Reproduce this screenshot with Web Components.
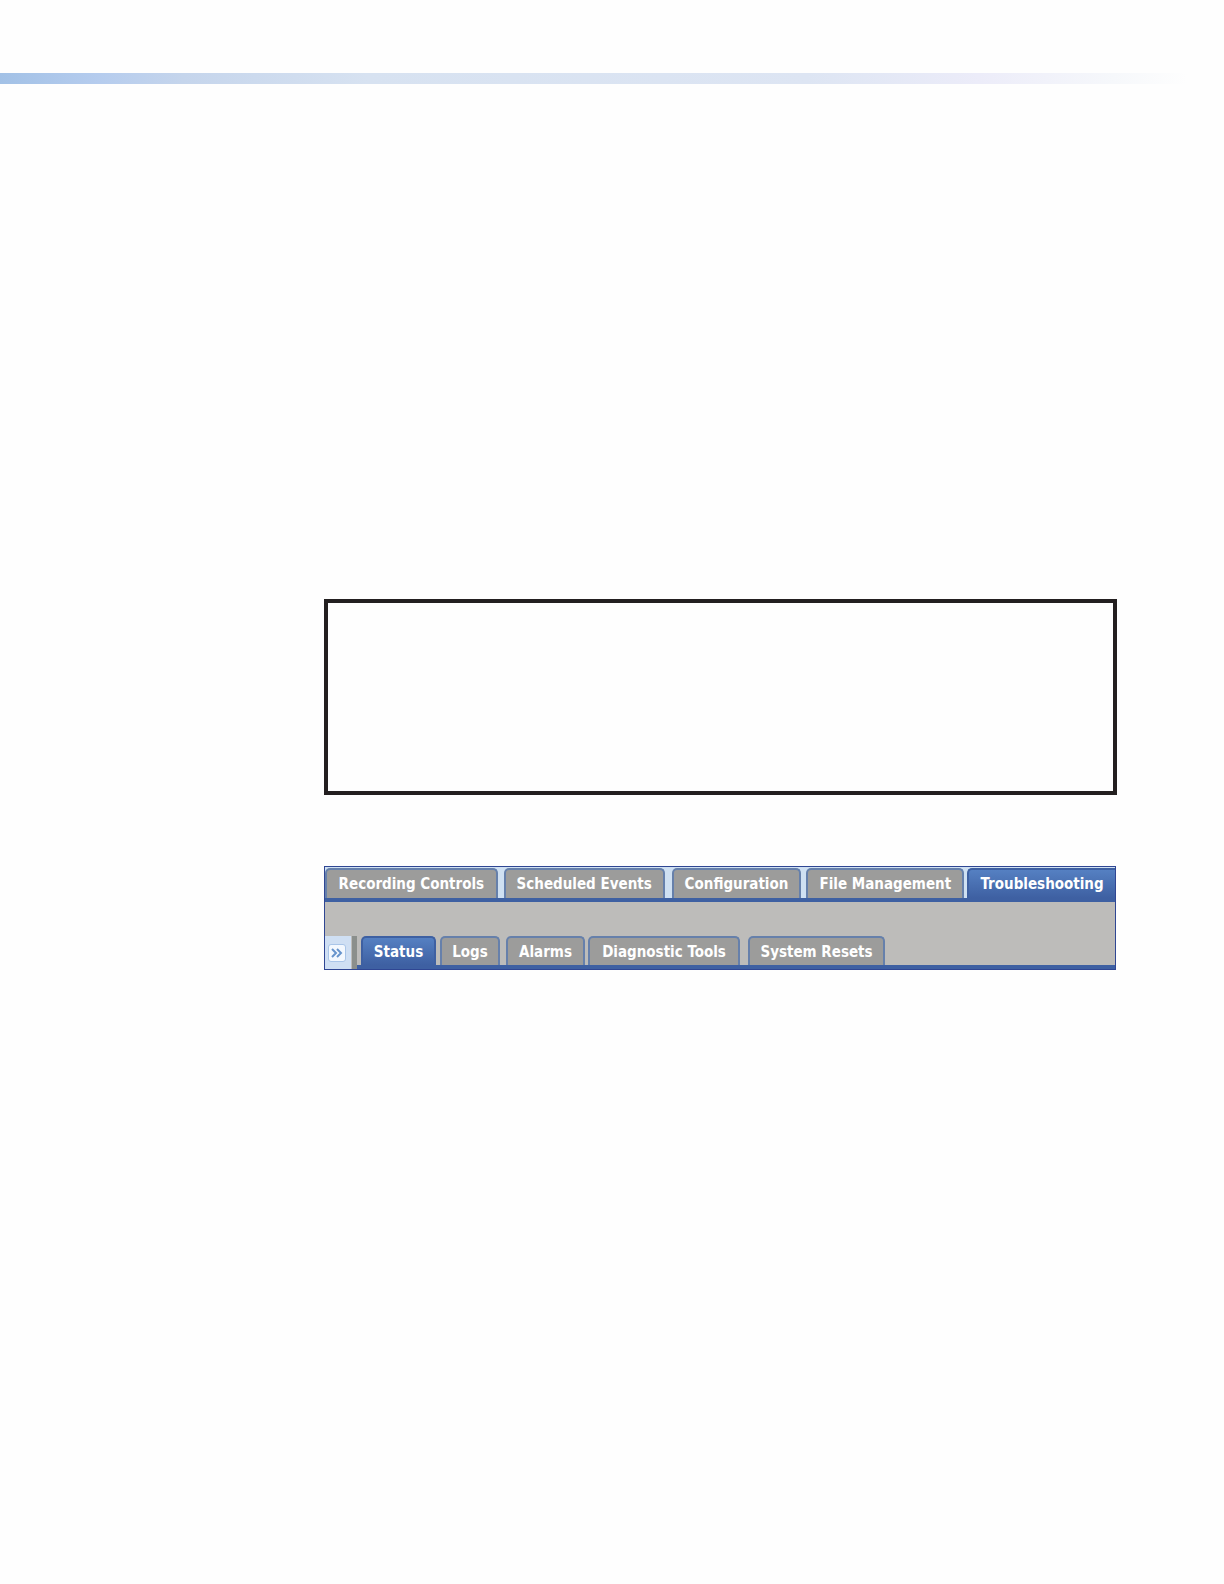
<!DOCTYPE html>
<html lang="en">
<head>
<meta charset="utf-8">
<meta name="viewport" content="width=device-width, initial-scale=1">
<title>Troubleshooting</title>
<style>
  body { margin: 0; background: #fefefe; font-family: "DejaVu Sans Condensed", "Noto Sans", sans-serif; }
</style>
</head>
<body>
<manual-page>
  <header-rule slot="header"></header-rule>
  <note-box></note-box>
  <tab-window>
    <tab-strip slot="main" label="Main">
      <tab-item style="--grow:173;--gap:6px">Recording Controls</tab-item>
      <tab-item style="--grow:161;--gap:7px">Scheduled Events</tab-item>
      <tab-item style="--grow:130;--gap:5px">Configuration</tab-item>
      <tab-item style="--grow:158;--gap:3px">File Management</tab-item>
      <tab-item style="--grow:148;--gap:0px" selected edge>Troubleshooting</tab-item>
    </tab-strip>
    <side-toggle slot="toggle"></side-toggle>
    <tab-strip slot="sub" label="Troubleshooting" nested>
      <tab-item style="--grow:75;--gap:4px" selected>Status</tab-item>
      <tab-item style="--grow:60;--gap:6px">Logs</tab-item>
      <tab-item style="--grow:79;--gap:3px">Alarms</tab-item>
      <tab-item style="--grow:152;--gap:8px">Diagnostic Tools</tab-item>
      <tab-item style="--grow:137;--gap:0px">System Resets</tab-item>
    </tab-strip>
  </tab-window>
</manual-page>
<script>
function define(name, markup, setup) {
  customElements.define(name, class extends HTMLElement {
    constructor() {
      super();
      this.attachShadow({ mode: "open" }).innerHTML = markup;
    }
    connectedCallback() { if (setup) setup(this, this.shadowRoot); }
  });
}

define("manual-page", `
  <style>
    :host { display: block; min-height: 100vh; box-sizing: border-box; padding-top: 73px; }
    main { display: flex; flex-direction: column; gap: 71px; padding: 515px 107px 0 324px; }
  </style>
  <slot name="header"></slot>
  <main><slot></slot></main>`);

define("header-rule", `
  <style>
    :host { display: block; height: 11px;
      background: linear-gradient(90deg, #a2c1e6 0, #b5ccee 8%, #c5d5ec 15%, #d7e2f1 30%, #dde5f3 66%, #ececf9 80%, #f6f8fb 91%, #fefefe 97%); }
  </style>`);

define("note-box", `
  <style>
    :host { display: block; box-sizing: border-box; min-height: 196px; border: 4px solid #231f20; }
  </style>`);

define("tab-window", `
  <style>
    :host { display: block; box-sizing: border-box; margin-right: 1px; border: 1px solid #2f4693; background: #bdbcba; }
    .sub { display: flex; align-items: stretch; padding-top: 34px; }
    ::slotted([slot="sub"]) { flex: 1; }
  </style>
  <slot name="main"></slot>
  <div class="sub"><slot name="toggle"></slot><slot name="sub"></slot></div>`);

define("tab-strip", `
  <style>
    :host { display: block; box-sizing: border-box; padding-top: 1px; border-bottom: 4px solid #3e60a2; background: #cfe0f2; }
    :host([nested]) { --tab-height: 29px; padding: 0 230px 0 4px; background: none; }
    .row { display: flex; }
  </style>
  <div class="row" role="tablist"><slot></slot></div>`,
  (el, root) => root.querySelector(".row").setAttribute("aria-label", el.getAttribute("label")));

define("tab-item", `
  <style>
    :host { display: block; flex: var(--grow) 1 0; min-width: 0; margin-right: var(--gap); }
    button { display: flex; align-items: flex-start; justify-content: center; box-sizing: border-box; width: 100%; height: var(--tab-height, 30px); margin: 0; padding: 0;
      border: 2px solid #6680ab; border-bottom: 0; border-radius: 5px 5px 0 0; background: #9c9c9b;
      color: #fff; font: bold 15px/28px "DejaVu Sans Condensed", "Noto Sans", sans-serif; white-space: nowrap; }
    :host([selected]) button { border-color: #3e60a2; background: linear-gradient(#5580c2, #3e60a2); }
    :host([edge]) button { border-right: 0; border-top-right-radius: 0; }
  </style>
  <button type="button" role="tab"><slot></slot></button>`,
  (el, root) => root.querySelector("button").setAttribute("aria-selected", el.hasAttribute("selected")));

define("side-toggle", `
  <style>
    :host { display: flex; align-items: center; justify-content: center; box-sizing: border-box; width: 32px; padding-right: 8px;
      background: linear-gradient(90deg, #cfdff3 26px, #bdbcba 26px 27px, #8b8f8c 27px); }
    button { display: flex; align-items: center; justify-content: center; width: 18px; height: 18px; box-sizing: border-box; padding: 0; border: 1px solid #a9c5e8; border-radius: 3px; background: #f3f8fe; }
    svg { display: block; flex: none; }
  </style>
  <button type="button" aria-label="Expand">
    <svg width="16" height="16" viewBox="0 0 16 16" fill="none" stroke="#6794cc" stroke-width="2"><path d="M3 4l4 4-4 4M8 4l4 4-4 4"/></svg>
  </button>`);
</script>
</body>
</html>
